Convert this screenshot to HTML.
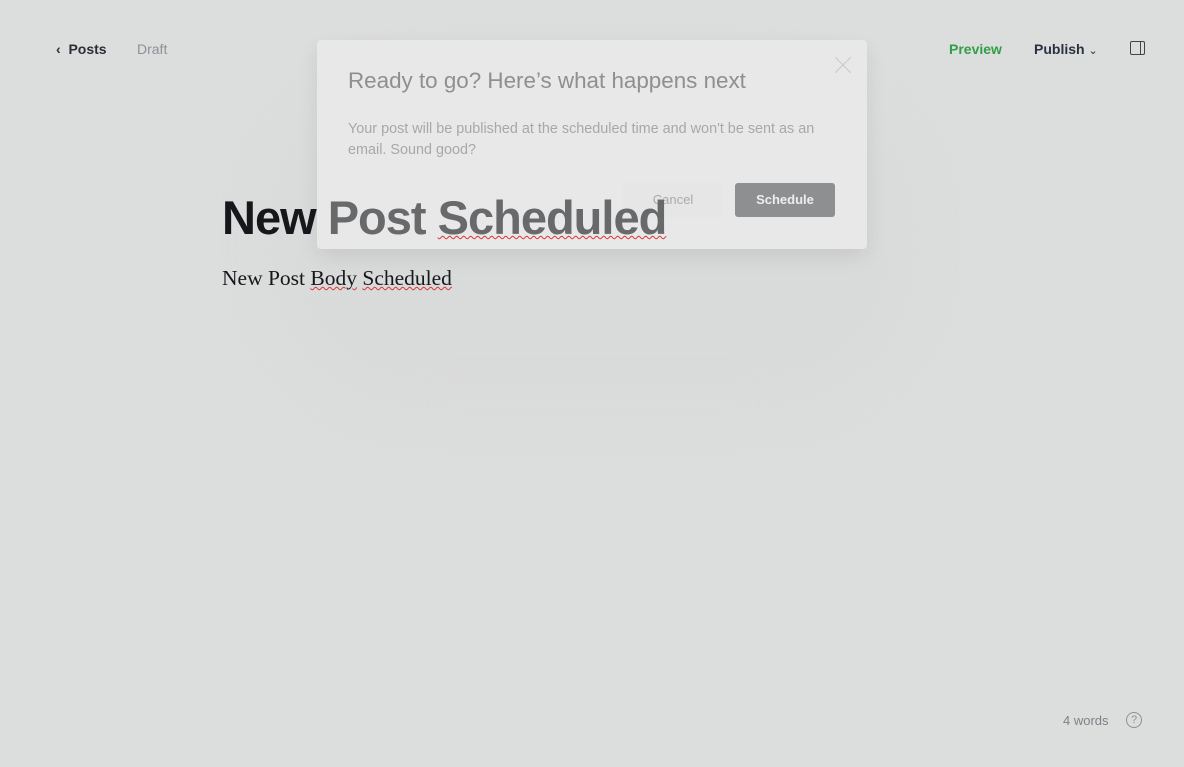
<!DOCTYPE html>
<html><head><style>
body{margin:0;width:1184px;height:767px;background:#dcdddd;font-family:"Liberation Sans",sans-serif;position:relative;overflow:hidden}
.a{position:absolute;white-space:nowrap}
.glow{position:absolute;left:275px;top:80px;width:635px;height:320px;border-radius:140px;background:#d9dada;filter:blur(25px)}
.modal{position:absolute;left:317px;top:40px;width:550px;height:209px;background:#e8e8e8;border-radius:4px;box-shadow:0 8px 20px rgba(0,0,0,.08)}
</style></head><body>
<div class="glow"></div>
<div class="a" style="left:56px;top:41px;font-size:14px;font-weight:bold;color:#2b2f36">‹&nbsp;&nbsp;Posts</div>
<div class="a" style="left:137px;top:41px;font-size:14px;color:#8d9196">Draft</div>
<div class="a" style="left:949px;top:41px;font-size:14px;font-weight:bold;color:#30a046">Preview</div>
<div class="a" style="left:1034px;top:41px;font-size:14px;font-weight:bold;color:#2b3040">Publish <span style="font-weight:normal;font-size:11px">⌄</span></div>
<div class="a" style="left:1130px;top:41px;width:13px;height:12px;border:1.5px solid #444;border-radius:2px"><div style="position:absolute;right:3px;top:0;width:1.5px;height:12px;background:#444"></div></div>
<div class="modal">
<div class="a" style="left:31px;top:28px;font-size:22.4px;color:#8f8f8f">Ready to go? Here’s what happens next</div>
<div class="a" style="left:31px;top:79px;font-size:14.4px;line-height:21px;color:#a8a8a8">Your post will be published at the scheduled time and won't be sent as an<br>email. Sound good?</div>
<svg class="a" style="left:518px;top:17px" width="16" height="16"><path d="M0 0L16 16M16 0L0 16" stroke="#c8c8c8" stroke-width="1"/></svg>
<div class="a" style="left:306px;top:143px;width:100px;height:34px;background:#e6e6e6;border-radius:3px;font-size:13px;color:#aaa;text-align:center;line-height:34px">Cancel</div>
<div class="a" style="left:418px;top:143px;width:100px;height:34px;background:#8e8f90;border-radius:3px;font-size:13px;font-weight:bold;color:#eee;text-align:center;line-height:34px">Schedule</div>
</div>
<div class="a" style="left:222px;top:190px;font-size:47px;font-weight:bold;letter-spacing:-1px;color:#15171a">New <span style="color:#68696b">Post <u style="text-decoration-color:#d33;text-decoration-style:wavy;text-decoration-thickness:1px">Scheduled</u></span></div>
<div class="a" style="left:222px;top:266px;font-size:21.5px;font-family:'Liberation Serif',serif;color:#15171a">New Post <span style="text-decoration:underline wavy #d33 1px">Body</span> <span style="text-decoration:underline wavy #d33 1px">Scheduled</span></div>
<div class="a" style="left:1063px;top:713px;font-size:13px;color:#7d8187">4 words</div>
<div class="a" style="left:1126px;top:712px;width:14px;height:14px;border:1.2px solid #8d9196;border-radius:50%;font-size:11px;color:#8d9196;text-align:center;line-height:14px">?</div>
</body></html>
